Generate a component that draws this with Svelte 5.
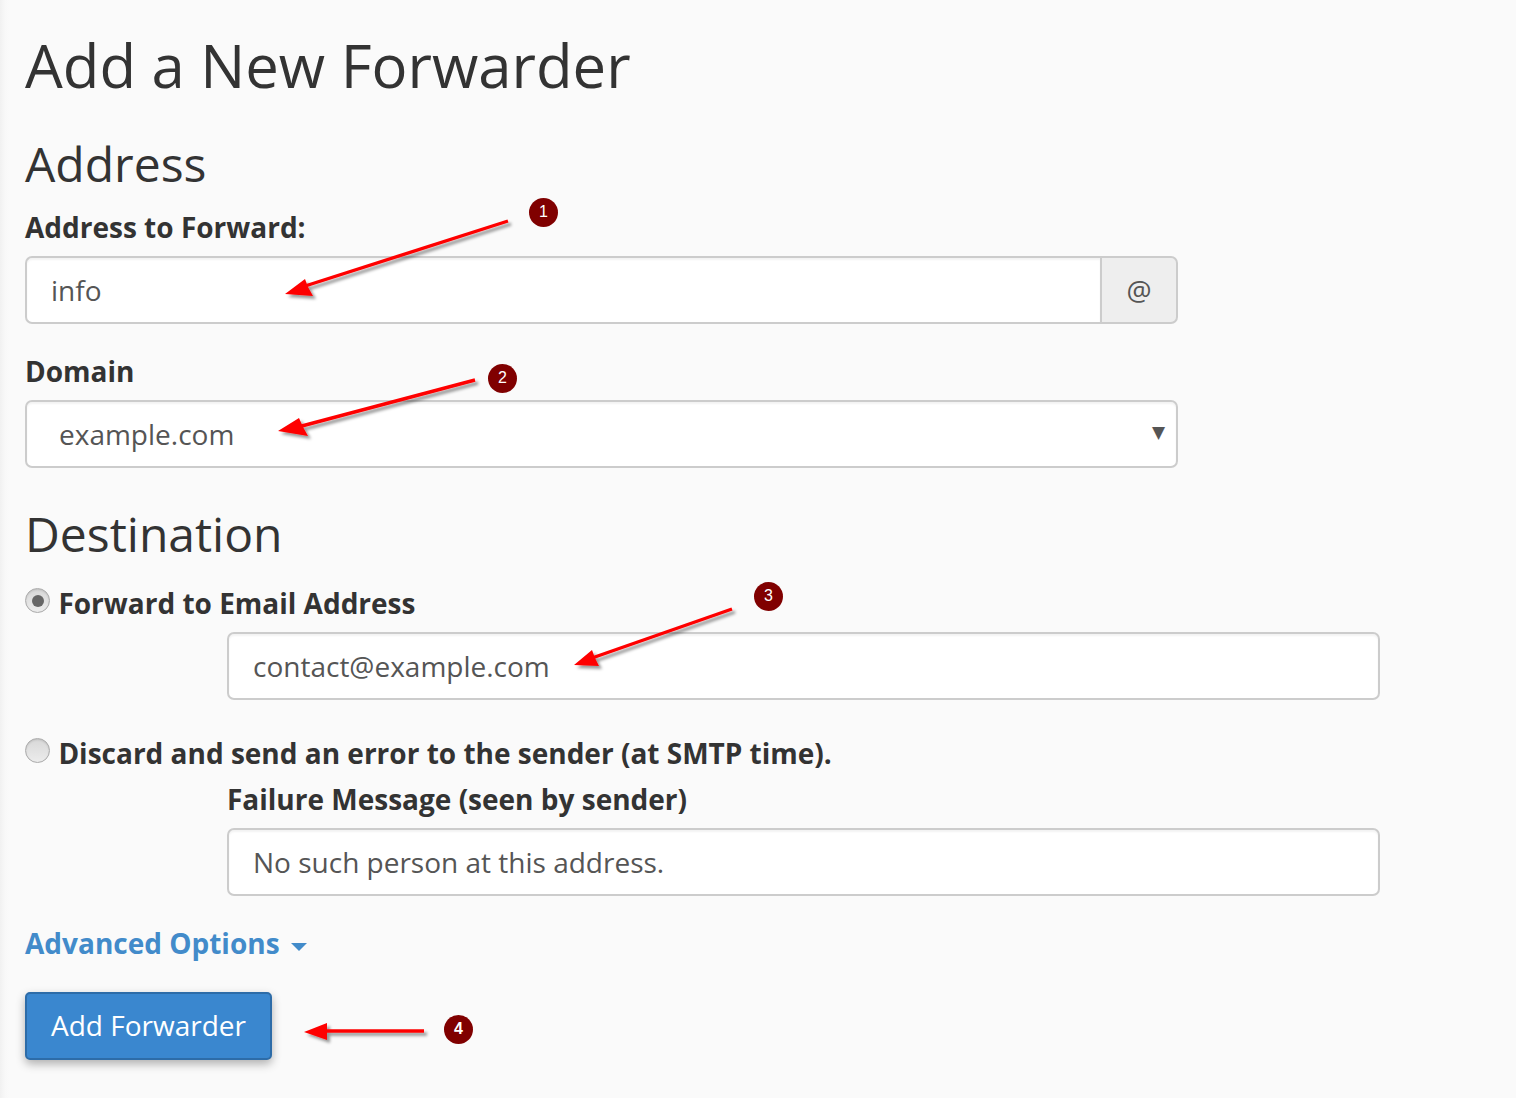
<script>
  const arrows = [
    { line: [508, 221, 302, 287], head: '285,294 305,279 308,287 313,296' },
    { line: [475, 380, 298, 427], head: '278,431 299,418 303,427 308,436' },
    { line: [732, 609, 592, 658], head: '574,665 592,650 595,658 599,666' },
    { line: [424, 1031, 325, 1031], head: '304,1032 327,1023 327,1040' }
  ];
  const badges = [
    { n: 1, x: 544, y: 213, bold: false },
    { n: 2, x: 503, y: 379, bold: false },
    { n: 3, x: 769, y: 597, bold: false },
    { n: 4, x: 459, y: 1030, bold: true }
  ];
</script>

<main class="page">
  <h1>Add a New Forwarder</h1>
  <h2 class="address">Address</h2>
  <label class="label" for="fwd">Address to Forward:</label>
  <div class="group">
    <input id="fwd" class="field grouped" value="info" />
    <span class="addon">@</span>
  </div>
  <label class="label domain" for="dom">Domain</label>
  <div class="select" id="dom">
    <span>example.com</span>
    <span class="caret">▼</span>
  </div>

  <h2 class="dest">Destination</h2>
  <div class="radio-row first">
    <span class="radio on"><span class="dot"></span></span>
    <span class="radio-label">Forward to Email Address</span>
  </div>
  <div class="indent first-input">
    <input class="field" value="contact@example.com" aria-label="Email" />
  </div>
  <div class="radio-row second">
    <span class="radio"></span>
    <span class="radio-label">Discard and send an error to the sender (at SMTP time).</span>
  </div>
  <div class="indent">
    <div class="fail-label">Failure Message (seen by sender)</div>
    <input class="field" value="No such person at this address." aria-label="Failure message" />
  </div>

  <div class="advanced">Advanced Options <span class="adv-caret"></span></div>
  <button class="submit">Add Forwarder</button>
</main>

<svg class="overlay" width="1516" height="1098" viewBox="0 0 1516 1098" aria-hidden="true">
  <defs>
    <filter id="sh" x="-10%" y="-30%" width="120%" height="160%">
      <feDropShadow dx="3" dy="3" stdDeviation="1.6" flood-color="#000" flood-opacity="0.4" />
    </filter>
  </defs>
  {#each arrows as a}
    <g filter="url(#sh)">
      <line x1={a.line[0]} y1={a.line[1]} x2={a.line[2]} y2={a.line[3]} stroke="#fe0000" stroke-width="3.4" />
      <polygon points={a.head} fill="#fe0000" />
    </g>
  {/each}
</svg>
{#each badges as b}
  <span class="badge" class:bold={b.bold} style="left:{b.x - 15}px;top:{b.y - 15}px">{b.n}</span>
{/each}

<style>
  :global(body) {
    margin: 0;
    background: #fafafa;
    font-family: "Open Sans", "Noto Sans", sans-serif;
    color: #333;
  }
  .page {
    box-sizing: border-box;
    position: relative;
    height: 1098px;
    padding: 0 0 0 25px;
    overflow: hidden;
    background: linear-gradient(to right, #f1f1f1 0, #f8f8f8 5px, #fafafa 9px);
  }
  h1 {
    margin: 0;
    padding-top: 24px;
    font-size: 59.8px;
    line-height: 82px;
    font-weight: 400;
  }
  h2 {
    margin: 0;
    font-size: 48px;
    line-height: 62px;
    font-weight: 400;
  }
  .address { margin-top: 27px; }
  .label {
    display: block;
    font-size: 28px;
    line-height: 36px;
    font-weight: 700;
    margin: 14px 0 11px;
  }
  .domain { margin-top: 29px; margin-bottom: 11px; }
  .group {
    display: flex;
    width: 1153px;
    height: 68px;
  }
  .field {
    box-sizing: border-box;
    width: 100%;
    height: 68px;
    padding: 0 24px;
    border: 2px solid #ccc;
    border-radius: 7px;
    background: #fff;
    color: #555;
    font: 400 28px "Open Sans", sans-serif;
    outline: none;
    box-shadow: inset 0 2px 2px rgba(0, 0, 0, 0.05);
  }
  .grouped {
    flex: 1;
    min-width: 0;
    border-right: 0;
    border-radius: 7px 0 0 7px;
  }
  .addon {
    box-sizing: border-box;
    width: 78px;
    display: flex;
    align-items: center;
    justify-content: center;
    border: 2px solid #ccc;
    border-radius: 0 7px 7px 0;
    background: #eee;
    color: #555;
    font-size: 28px;
  }
  .select {
    box-sizing: border-box;
    width: 1153px;
    height: 68px;
    display: flex;
    align-items: center;
    justify-content: space-between;
    padding: 0 11px 0 32px;
    border: 2px solid #ccc;
    border-radius: 7px;
    background: #fff;
    color: #555;
    font-size: 28px;
    box-shadow: inset 0 2px 2px rgba(0, 0, 0, 0.05);
  }
  .caret { font-size: 17px; color: #555; font-family: "DejaVu Sans", sans-serif; position: relative; top: -2px; }
  .dest { margin-top: 35px; }
  .radio-row {
    display: flex;
    align-items: flex-start;
    gap: 8.4px;
    height: 36px;
    font-size: 28px;
    line-height: 36px;
    font-weight: 700;
  }
  .first { margin-top: 20px; }
  .second { margin-top: 35px; }
  .radio {
    box-sizing: border-box;
    width: 25px;
    height: 25px;
    flex: none;
    margin-top: 3px;
    border-radius: 50%;
    border: 1px solid #aaa;
    background: linear-gradient(#d8d8d8, #ececec);
    display: flex;
    align-items: center;
    justify-content: center;
    box-shadow: inset 0 1px 2px rgba(0, 0, 0, 0.12);
  }
  .dot { width: 12px; height: 12px; border-radius: 50%; background: #666; }
  .indent { width: 1153px; margin-left: 202px; }
  .first-input { margin-top: 11px; }
  .fail-label {
    font-size: 28px;
    line-height: 36px;
    font-weight: 700;
    margin: 10px 0 11px;
  }
  .advanced {
    margin-top: 29px;
    font-size: 28px;
    line-height: 36px;
    font-weight: 700;
    color: #428bca;
  }
  .adv-caret {
    display: inline-block;
    margin-left: 4px;
    vertical-align: 3px;
    border-top: 8px solid #428bca;
    border-left: 8px solid transparent;
    border-right: 8px solid transparent;
  }
  .submit {
    display: block;
    box-sizing: border-box;
    width: 247px;
    height: 68px;
    margin-top: 31px;
    padding: 0 0 3px;
    border: 2px solid #2d6ca8;
    border-radius: 5px;
    background: #3a87cf;
    color: #fff;
    font: 400 28px "Open Sans", sans-serif;
    box-shadow: 0 4px 10px rgba(0, 0, 0, 0.3);
  }
  .overlay { position: absolute; left: 0; top: 0; pointer-events: none; }
  .badge {
    position: absolute;
    width: 29px;
    height: 29px;
    border-radius: 50%;
    background: #800000;
    color: #fff;
    font: 400 16px/28px "Liberation Sans", sans-serif;
    text-align: center;
  }
  .bold { font-weight: 700; }
</style>
